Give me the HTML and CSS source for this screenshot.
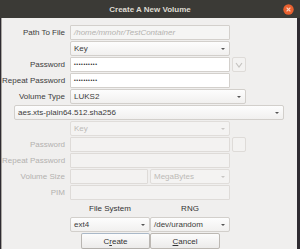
FILE: index.html
```html
<!DOCTYPE html>
<html lang="en">
<head>
    <meta charset="UTF-8">
    <title>Create A New Volume</title>
    <link rel="stylesheet" href="styles.css">
</head>
<body>
    <div class="window">
        <div class="titlebar">
            <span class="title">Create A New Volume</span>
            <span class="close">
                <svg width="11" height="11" viewBox="0 0 11 11">
                    <circle cx="5.5" cy="5.5" r="5.2" fill="#e9602f"/>
                    <path d="M3.6 3.6 L7.4 7.4 M7.4 3.6 L3.6 7.4" stroke="#fbd3c2" stroke-width="1.2"/>
                </svg>
            </span>
        </div>

        <div class="dialog">
            <div class="form">
                <!-- top section -->
                <div class="lbl">Path To File</div>
                <div class="field readonly span23">/home/mmohr/TestContainer</div>

                <div class="lbl"></div>
                <div class="combo span23">Key<span class="arrow"></span></div>

                <div class="lbl">Password</div>
                <div class="field span23"><span class="dots">••••••••••</span></div>
                <div class="eye"><svg width="8" height="6" viewBox="0 0 8 6"><path d="M1 1 L4 5 L7 1" fill="none" stroke="#c4c2bf" stroke-width="1.1"/></svg></div>

                <div class="lbl">Repeat Password</div>
                <div class="field span23"><span class="dots">••••••••••</span></div>

                <div class="lbl">Volume Type</div>
                <div class="combo span24">LUKS2<span class="arrow"></span></div>

                <div class="combo wide">aes.xts-plain64.512.sha256<span class="arrow"></span></div>

                <!-- keyfile section (disabled) -->
                <div class="lbl"></div>
                <div class="combo disabled span23">Key<span class="arrow"></span></div>

                <div class="lbl off">Password</div>
                <div class="field disabled span23"></div>
                <div class="eye disabled"></div>

                <div class="lbl off">Repeat Password</div>
                <div class="field disabled span23"></div>

                <div class="lbl off">Volume Size</div>
                <div class="field disabled size"></div>
                <div class="combo disabled">MegaBytes<span class="arrow"></span></div>

                <div class="lbl off">PIM</div>
                <div class="field disabled span23"></div>

                <!-- bottom -->
                <div class="lbl"></div>
                <div class="head">File System</div>
                <div class="head">RNG</div>

                <div class="lbl"></div>
                <div class="combo">ext4<span class="arrow"></span></div>
                <div class="combo">/dev/urandom<span class="arrow"></span></div>

                <div class="lbl"></div>
                <button class="btn create">C<u>r</u>eate</button>
                <button class="btn cancel"><u>C</u>ancel</button>
            </div>
        </div>
    </div>
</body>
</html>
```

FILE: styles.css
```css
body {
    margin: 0;
    padding: 0;
    background: #2e2b31;
    font-family: "Liberation Sans", Arial, sans-serif;
    font-size: 8px;
    color: #3c3c3c;
}

.window {
    width: 300px;
    height: 249px;
    display: flex;
    flex-direction: column;
    overflow: hidden;
}

.titlebar {
    height: 18px;
    background: #3b3a36;
    display: flex;
    justify-content: center;
    align-items: center;
    position: relative;
}

.title {
    color: #dfdbd2;
    font-weight: bold;
    font-size: 8px;
    padding-top: 1px;
}

.close {
    position: absolute;
    right: 6px;
    top: 4px;
    width: 11px;
    height: 11px;
}

.dialog {
    flex: 1;
    margin: 0 3px 0 1px;
    border-left: 1px solid #a9a6a2;
    background: #f0efee;
    padding-top: 7px;
}

.form {
    display: grid;
    grid-template-columns: 68px 80px 80px 16px 1fr;
    grid-auto-rows: 15px;
    row-gap: 1px;
}

.lbl {
    grid-column: 1;
    text-align: right;
    padding-right: 5px;
    line-height: 15px;
    white-space: nowrap;
}

.lbl.off {
    color: #b3b1ae;
}

.field {
    background: #fff;
    border: 1px solid #d3d0cc;
    border-radius: 1px;
    line-height: 13px;
    padding-left: 3px;
    overflow: hidden;
    white-space: nowrap;
}

.field.readonly {
    background: #f5f5f4;
    color: #b4b2af;
    font-style: italic;
}

.field.disabled {
    background: #f3f2f1;
    border-color: #dedbd8;
}

.field.size {
    grid-column: 2;
    margin-right: 2px;
}

.span23 {
    grid-column: 2 / 4;
}

.span24 {
    grid-column: 2 / 5;
}

.dots {
    font-size: 5px;
    letter-spacing: 0.6px;
    color: #222;
    vertical-align: 1px;
}

.eye {
    grid-column: 4;
    margin-left: 2px;
    background: #f3f2f1;
    border: 1px solid #dedbd8;
    border-radius: 2px;
    display: flex;
    justify-content: center;
    align-items: center;
}

.combo {
    background: linear-gradient(#fdfdfd, #f1f0ef);
    border: 1px solid #d2cfcb;
    border-radius: 2px;
    line-height: 13px;
    padding-left: 3px;
    position: relative;
    white-space: nowrap;
}

.combo.disabled {
    color: #bcbab7;
    background: #f4f3f2;
    border-color: #e0ddda;
}

.combo.wide {
    grid-column: 1 / -1;
    margin: 0 13px 0 12px;
}

.arrow {
    position: absolute;
    right: 4px;
    top: 6px;
    width: 0;
    height: 0;
    border-left: 2px solid transparent;
    border-right: 2px solid transparent;
    border-top: 2px solid #555;
}

.combo.disabled .arrow {
    border-top-color: #c8c6c3;
}

.head {
    text-align: center;
    line-height: 15px;
    color: #333;
}

.btn {
    font-family: "Liberation Sans", Arial, sans-serif;
    font-size: 8px;
    color: #333;
    background: linear-gradient(#fcfcfc, #ecebea);
    border: 1px solid #bcb8b3;
    border-radius: 2px;
    padding: 0;
    height: 16px;
}

.btn.create {
    grid-column: 2;
    margin-left: 11px;
    border-color: #a9b8c8 #b9b6b2 #b3b0ac;
}

.btn.cancel {
    grid-column: 3;
    width: 70px;
}
```
